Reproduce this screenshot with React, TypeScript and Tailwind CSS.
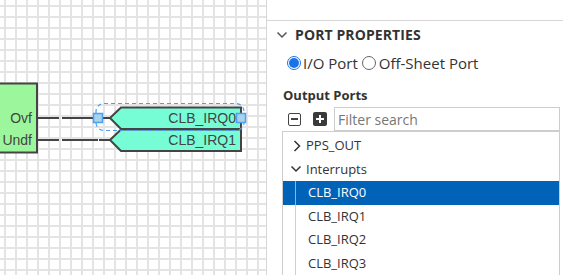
import React from 'react';

const listFont = { fontFamily: '"Open Sans", "Noto Sans", sans-serif' };

function Canvas() {
  return (
    <div className="relative h-full w-[266px] shrink-0 overflow-hidden bg-white bg-[linear-gradient(to_right,#e4e4e4_2px,transparent_2px),linear-gradient(to_bottom,#e4e4e4_2px,transparent_2px)] bg-[size:11px_11px] bg-[position:4px_5px]">
      <svg className="absolute left-0 top-0" width="266" height="275" style={{ fontFamily: '"Liberation Sans", Arial, sans-serif' }}>
        {/* counter block */}
        <rect x="-10" y="83.5" width="47" height="69" fill="#9cf79c" stroke="#444" strokeWidth="2" />
        <text x="32" y="123" fontSize="14" fill="#444" textAnchor="end">Ovf</text>
        <text x="32" y="145" fontSize="14" fill="#444" textAnchor="end">Undf</text>

        {/* wires */}
        <path d="M38 118 H59 M62 118 H94 M103 118 H111" stroke="#444" strokeWidth="2" />
        <path d="M38 140 H59 M62 140 H98 M99 140 H111" stroke="#444" strokeWidth="2" />

        {/* output ports */}
        <polygon points="110,118 121,107.5 241,107.5 241,129 121,129" fill="#76fdd6" stroke="#444" strokeWidth="2" />
        <polygon points="110,140 121,129.5 241,129.5 241,151 121,151" fill="#76fdd6" stroke="#444" strokeWidth="2" />
        <text x="236" y="123" fontSize="14" fill="#444" textAnchor="end">CLB_IRQ0</text>
        <text x="236" y="145" fontSize="14" fill="#444" textAnchor="end">CLB_IRQ1</text>

        {/* selection */}
        <rect x="96" y="103.5" width="148" height="27" rx="8" fill="none" stroke="#4aa0f5" strokeWidth="1.2" strokeDasharray="4 3" />
        <rect x="93.5" y="113.5" width="9" height="9" fill="#a9d3e8" stroke="#4aa0f5" strokeWidth="1.5" />
        <rect x="236.5" y="113.5" width="9" height="9" fill="#a9d3e8" stroke="#4aa0f5" strokeWidth="1.5" />
      </svg>
    </div>
  );
}

function Chevron({ down, className }: { down?: boolean; className?: string }) {
  return (
    <svg width="12" height="12" viewBox="0 0 12 12" className={className}>
      {down ? (
        <path d="M1.5 3.5 L6 8 L10.5 3.5" fill="none" stroke="currentColor" strokeWidth="1.5" />
      ) : (
        <path d="M3.5 1 L8.5 6 L3.5 11" fill="none" stroke="currentColor" strokeWidth="1.5" />
      )}
    </svg>
  );
}

function Radio({ checked }: { checked?: boolean }) {
  return checked ? (
    <span className="flex h-[14px] w-[14px] shrink-0 items-center justify-center rounded-full border border-[#1a73e8]">
      <span className="h-[10px] w-[10px] rounded-full bg-[#1a73e8]" />
    </span>
  ) : (
    <span className="block h-[14px] w-[14px] shrink-0 rounded-full border border-[#666]" />
  );
}

function Panel() {
  const items = ['CLB_IRQ0', 'CLB_IRQ1', 'CLB_IRQ2', 'CLB_IRQ3'];
  return (
    <div className="flex h-full flex-1 flex-col border-l border-[#d6d6d6] bg-white text-[#333]" style={listFont}>
      <div className="h-[21px] shrink-0 border-b border-[#d6d6d6]" />
      <div className="flex h-[26px] items-center pl-[9px] pt-[1px]">
        <Chevron down className="text-[#555]" />
        <span className="ml-[7px] text-[14px] font-bold tracking-[0.1px]">PORT PROPERTIES</span>
      </div>
      <div className="mt-[6px] flex h-[20px] items-center pl-[20px] text-[15px]">
        <Radio checked />
        <span className="ml-[2px]">I/O Port</span>
        <span className="ml-[4px]"><Radio /></span>
        <span className="ml-[3px]">Off-Sheet Port</span>
      </div>
      <div className="mt-[13px] pl-[16px] text-[13px] font-bold leading-[18px]">Output Ports</div>
      <div className="mt-[3px] flex h-[24px] items-center pl-[21px] pr-[3px]">
        <span className="flex h-[13px] w-[13px] items-center justify-center rounded-[2px] border-[1.5px] border-[#444]">
          <span className="h-[1.5px] w-[7px] bg-[#444]" />
        </span>
        <span className="relative ml-[12px] flex h-[14px] w-[14px] items-center justify-center rounded-[2px] bg-[#3a3a3a]">
          <span className="absolute h-[2px] w-[8px] bg-white" />
          <span className="absolute h-[8px] w-[2px] bg-white" />
        </span>
        <input
          className="ml-[7px] h-[24px] flex-1 border border-[#cdcdcd] px-[3px] text-[14px] outline-none placeholder:text-[#777]"
          placeholder="Filter search"
        />
      </div>
      <div className="ml-[15px] mr-[3px] flex-1 border-l border-r border-t border-[#cdcdcd] pt-[2px] text-[13px]">
        <div className="flex h-[23.5px] items-center pl-[8px]">
          <Chevron className="text-[#333]" />
          <span className="ml-[3px]">PPS_OUT</span>
        </div>
        <div className="flex h-[23.5px] items-center pl-[7px]">
          <Chevron down className="text-[#333]" />
          <span className="ml-[4px]">Interrupts</span>
        </div>
        {items.map((it, i) => (
          <div
            key={it}
            className={`flex h-[23.5px] items-center ${i === 0 ? 'bg-[#0063b8] text-white' : ''}`}
          >
            <span className={`ml-[12px] h-full w-px ${i === 0 ? 'bg-[#8fb4d8]' : 'bg-[#d0d0d0]'}`} />
            <span className="ml-[12px]">{it}</span>
          </div>
        ))}
      </div>
    </div>
  );
}

export default function App() {
  return (
    <div className="flex h-[275px] w-[563px] overflow-hidden">
      <Canvas />
      <Panel />
    </div>
  );
}
